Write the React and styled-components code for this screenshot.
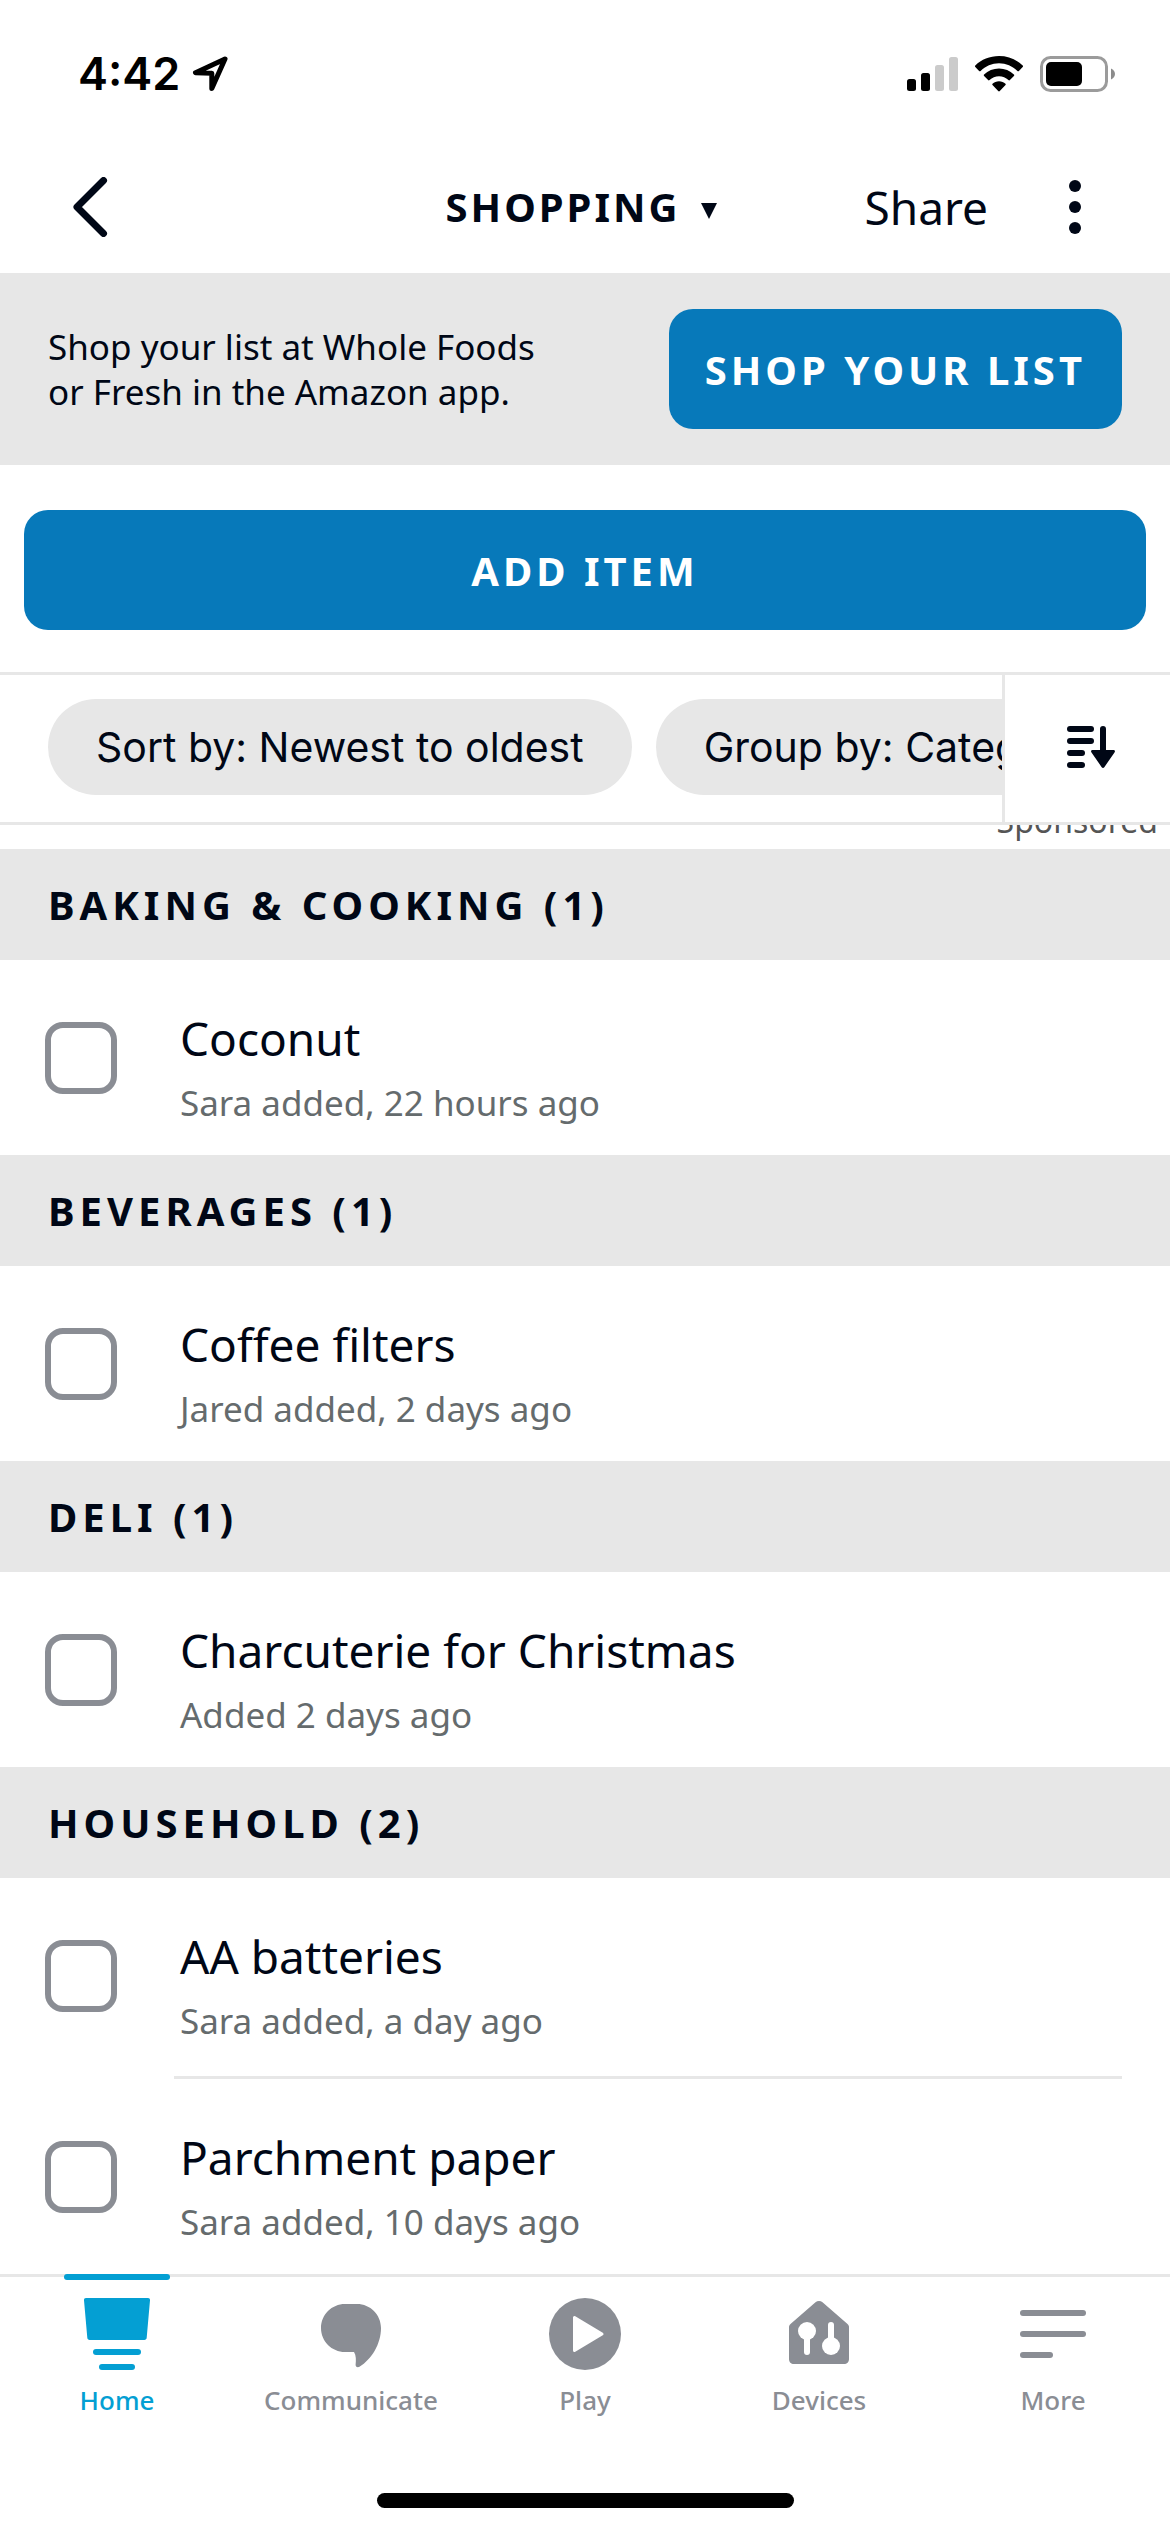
import React, { useState } from 'react';
import styled, { createGlobalStyle } from 'styled-components';

const color = {
  ink: '#000716',
  muted: '#656b6d',
  grey: '#8a8d94',
  line: '#e7e7e7',
  blue: '#0779ba',
  accent: '#049fd3',
};

const GlobalStyle = createGlobalStyle`
  *, *::before, *::after { box-sizing: border-box; }
  body {
    margin: 0;
    background: #fff;
    color: ${color.ink};
    font-family: "Noto Sans", "Open Sans", sans-serif;
  }
  button {
    margin: 0;
    padding: 0;
    border: 0;
    background: none;
    color: inherit;
    font: inherit;
    cursor: pointer;
  }
  svg { display: block; flex: none; }
`;

const Screen = styled.div`
  display: flex;
  flex-direction: column;
  min-height: 100vh;
`;

const StatusBar = styled.div`
  display: flex;
  align-items: center;
  justify-content: space-between;
  height: 141px;
  padding: 6px 54px 0 78px;
  color: #000;
`;

const StatusGroup = styled.div`
  display: flex;
  align-items: center;
  gap: ${(p) => p.$gap}px;
`;

const Clock = styled.time`
  font-family: Inter, sans-serif;
  font-size: 45px;
  line-height: 52px;
  font-weight: 600;
`;

const Header = styled.header`
  display: grid;
  grid-template-columns: 1fr auto 1fr;
  align-items: center;
  height: 132px;
  padding: 0 68px 0 60px;
`;

const IconButton = styled.button`
  display: flex;
  align-items: center;
  justify-content: center;
`;

const BackButton = styled(IconButton)`
  && {
    justify-self: start;
    padding: 0 12px;
  }
`;

const ListTitle = styled.button`
  && {
    display: flex;
    align-items: center;
    gap: 20px;
    font-size: 40px;
    line-height: 54px;
    font-weight: 700;
    letter-spacing: 3px;
  }
`;

const HeaderActions = styled.div`
  display: flex;
  align-items: center;
  justify-content: flex-end;
  gap: 60px;
`;

const ShareButton = styled.button`
  && {
    font-size: 46px;
    line-height: 60px;
  }
`;

const Banner = styled.section`
  display: flex;
  align-items: center;
  justify-content: space-between;
  gap: 48px;
  padding: 36px 48px;
  background: ${color.line};
`;

const BannerText = styled.p`
  margin: 0;
  max-width: 504px;
  font-size: 35px;
  line-height: 45px;
`;

const PrimaryButton = styled.button`
  && {
    height: 120px;
    padding: 0 36px;
    border-radius: 24px;
    background: ${color.blue};
    color: #fff;
    font-size: 40px;
    font-weight: 700;
    letter-spacing: 4px;
    white-space: nowrap;
    flex: ${(p) => (p.$wide ? '1' : 'none')};
  }
`;

const AddBar = styled.div`
  display: flex;
  padding: 45px 24px 42px;
`;

const FilterBar = styled.div`
  display: flex;
  height: 153px;
  border-top: 3px solid ${color.line};
  border-bottom: 3px solid ${color.line};
`;

const FilterScroller = styled.div`
  display: flex;
  flex: 1;
  align-items: flex-start;
  gap: 24px;
  min-width: 0;
  padding: 24px 0 0 48px;
  overflow: hidden;
`;

const Pill = styled.button`
  && {
    flex: none;
    height: 96px;
    padding: 0 48px;
    border-radius: 48px;
    background: ${color.line};
    font-family: Inter, sans-serif;
    font-size: 41px;
    white-space: nowrap;
  }
`;

const SortButton = styled(IconButton)`
  && {
    flex: none;
    width: 168px;
    padding: 0 0 3px 6px;
    border-left: 3px solid ${color.line};
  }
`;

const SponsoredClip = styled.div`
  display: flex;
  align-items: flex-end;
  justify-content: flex-end;
  height: 24px;
  padding: 0 12px 8px;
  overflow: hidden;
  color: #555;
  font-size: 32px;
  line-height: 40px;
`;

const List = styled.main`
  flex: 1;
`;

const GroupTitle = styled.h2`
  margin: 0;
  padding: 28px 48px;
  background: ${color.line};
  font-size: 40px;
  line-height: 55px;
  font-weight: 700;
  letter-spacing: 5px;
`;

const Items = styled.ul`
  margin: 0;
  padding: 0;
  list-style: none;
`;

const Item = styled.li`
  padding: 0 48px 0 45px;
`;

const ItemLabel = styled.label`
  display: flex;
  align-items: flex-start;
  gap: 57px;
`;

const Checkbox = styled.input`
  appearance: none;
  flex: none;
  width: 72px;
  height: 72px;
  margin: 62px 0 0;
  border: 6px solid ${color.grey};
  border-radius: 18px;
  background: #fff;
  &:checked { background: ${color.accent}; }
`;

const ItemBody = styled.span`
  display: flex;
  flex: 1;
  flex-direction: column;
  height: ${(p) => (p.$divided ? 201 : 195)}px;
  padding: 48px 0 0 6px;
  border-bottom: ${(p) => (p.$divided ? `3px solid ${color.line}` : '0')};
`;

const ItemName = styled.span`
  font-size: 46px;
  line-height: 60px;
`;

const ItemNote = styled.span`
  color: ${color.muted};
  font-size: 35px;
  line-height: 70px;
`;

const TabBar = styled.nav`
  display: grid;
  grid-template-columns: repeat(5, 1fr);
  height: 219px;
  border-top: 3px solid ${color.line};
`;

const Tab = styled.a`
  position: relative;
  display: flex;
  flex-direction: column;
  align-items: center;
  gap: 12px;
  padding-top: 21px;
  color: ${(p) => (p.$active ? color.accent : color.grey)};
  font-size: 26px;
  line-height: 36px;
  font-weight: 500;
  text-decoration: none;
  &::before {
    content: "";
    display: ${(p) => (p.$active ? 'block' : 'none')};
    position: absolute;
    top: -3px;
    width: 106px;
    height: 6px;
    border-radius: 3px;
    background: ${color.accent};
  }
`;

const HomeIndicator = styled.div`
  width: 417px;
  height: 15px;
  margin: 0 auto 24px;
  border-radius: 8px;
  background: #000;
`;

const LocationIcon = () => (
  <svg width="37" height="37" viewBox="0 0 37 37" fill="none" stroke="currentColor" strokeWidth="5" strokeLinejoin="round">
    <path d="M33 4 L3.500 17.800 L19.800 18.200 L19.800 33.500 Z" />
  </svg>
);

const SignalIcon = () => (
  <svg width="51" height="34" viewBox="0 0 51 34">
    <rect x="0" y="22" width="9" height="12" rx="2.500" />
    <rect x="14" y="16" width="9" height="18" rx="2.500" />
    <rect x="28" y="8" width="9" height="26" rx="2.500" fill="#cbcbcb" />
    <rect x="42" y="0" width="9" height="34" rx="2.500" fill="#cbcbcb" />
  </svg>
);

const WifiIcon = () => (
  <svg width="48" height="36" viewBox="0 0 48 36">
    <path d="M24 0C14.800 0 6.400 3.500 0.300 9.400c-.5.400-.5 1 0 1.500l3.800 4c.4.400 1 .4 1.500 0C10.400 10.200 17 7.300 24 7.300s13.600 2.900 18.400 7.600c.5.400 1.100.4 1.500 0l3.800-4c.5-.5.500-1.100 0-1.500C41.600 3.500 33.200 0 24 0z" />
    <path d="M24 12.500c-5.700 0-11 2.200-14.900 5.900-.5.400-.5 1 0 1.500l4 4.200c.4.400 1 .4 1.500 0 2.500-2.300 5.800-3.800 9.400-3.800s6.900 1.500 9.400 3.800c.5.400 1.100.4 1.500 0l4-4.200c.5-.5.500-1.100 0-1.500-3.900-3.700-9.200-5.900-14.900-5.900z" />
    <path d="M24 25.300c-2.500 0-4.800.9-6.500 2.400-.4.400-.4 1 0 1.400l5.700 6c.5.500 1.100.5 1.600 0l5.700-6c.4-.4.400-1 0-1.400-1.700-1.500-4-2.400-6.500-2.400z" />
  </svg>
);

const BatteryIcon = () => (
  <svg width="76" height="36" viewBox="0 0 76 36">
    <rect x="1.500" y="1.500" width="65" height="33" rx="9" fill="none" stroke="#9b9b9b" strokeWidth="3" />
    <rect x="6" y="6" width="36" height="24" rx="5" />
    <path d="M71 12.500c2.400 1 4 3.100 4 5.500s-1.600 4.500-4 5.500z" fill="#8c8c8c" />
  </svg>
);

const BackIcon = () => (
  <svg width="36" height="60" viewBox="0 0 36 60" fill="none" stroke="currentColor" strokeWidth="7" strokeLinecap="round" strokeLinejoin="round">
    <path d="M31.500 3.500 L5 30 L31.500 56.500" />
  </svg>
);

const CaretIcon = () => (
  <svg width="16" height="24" viewBox="0 0 16 24" fill="currentColor">
    <path d="M0 8h16L8 24z" />
  </svg>
);

const DotsIcon = () => (
  <svg width="54" height="54" viewBox="0 0 54 54" fill="currentColor">
    <circle cx="27" cy="6" r="6" />
    <circle cx="27" cy="27" r="6" />
    <circle cx="27" cy="48" r="6" />
  </svg>
);

const SortIcon = () => (
  <svg width="48" height="42" viewBox="0 0 48 42" fill="currentColor">
    <rect x="0" y="0" width="27" height="6" rx="3" />
    <rect x="0" y="12" width="27" height="6" rx="3" />
    <rect x="0" y="24" width="18" height="6" rx="3" />
    <rect x="0" y="36" width="18" height="6" rx="3" />
    <path d="M33 3a3 3 0 0 1 6 0v21h7.500c1.300 0 2 1.300 1 2.400L37.300 41.200c-.7.900-1.900.9-2.600 0L24.500 26.400c-1-1.100-.3-2.400 1-2.400H33z" />
  </svg>
);

const HomeIcon = () => (
  <svg width="72" height="72" viewBox="0 0 72 72" fill="currentColor">
    <path d="M5 0h62c1.300 0 2.100.9 2 2.200l-3.300 37.600c-.1 1.300-1 2.200-2.300 2.200H8.600c-1.300 0-2.200-.9-2.300-2.200L3 2.200C2.900.9 3.700 0 5 0z" />
    <rect x="12" y="51" width="48" height="6" rx="3" />
    <rect x="18" y="66" width="36" height="6" rx="3" />
  </svg>
);

const ChatIcon = () => (
  <svg width="72" height="72" viewBox="0 0 72 72" fill="currentColor">
    <path d="M30 6h12c13.300 0 24 10.700 24 24 0 16-9.500 31.500-21.500 38.700-2 1.200-4.200 0-3.900-2.200.5-4.500.6-9-1.600-12.500h-9C16.700 54 6 43.300 6 30S16.700 6 30 6z" />
  </svg>
);

const PlayIcon = () => (
  <svg width="72" height="72" viewBox="0 0 72 72">
    <circle cx="36" cy="36" r="36" fill="currentColor" />
    <path d="M25.500 19.500v33L53 36z" fill="#fff" stroke="#fff" strokeWidth="3" strokeLinejoin="round" />
  </svg>
);

const DevicesIcon = () => (
  <svg width="72" height="72" viewBox="0 0 72 72">
    <path d="M32.500 4.300c2-1.700 5-1.700 7 0L64.500 26c1 .8 1.500 1.900 1.500 3v32c0 3-2 5-5 5H11c-3 0-5-2-5-5V29c0-1.100.5-2.200 1.500-3z" fill="currentColor" />
    <g fill="#fff">
      <circle cx="24" cy="33" r="9" />
      <rect x="21" y="33" width="6" height="24" rx="3" />
      <circle cx="48" cy="48" r="9" />
      <rect x="45" y="24" width="6" height="24" rx="3" />
    </g>
  </svg>
);

const MoreIcon = () => (
  <svg width="72" height="72" viewBox="0 0 72 72" fill="currentColor">
    <rect x="3" y="12" width="66" height="6" rx="3" />
    <rect x="3" y="33" width="66" height="6" rx="3" />
    <rect x="3" y="54" width="33" height="6" rx="3" />
  </svg>
);

const groups = [
  { title: 'BAKING & COOKING', items: [{ name: 'Coconut', note: 'Sara added, 22 hours ago' }] },
  { title: 'BEVERAGES', items: [{ name: 'Coffee filters', note: 'Jared added, 2 days ago' }] },
  { title: 'DELI', items: [{ name: 'Charcuterie for Christmas', note: 'Added 2 days ago' }] },
  {
    title: 'HOUSEHOLD',
    items: [
      { name: 'AA batteries', note: 'Sara added, a day ago' },
      { name: 'Parchment paper', note: 'Sara added, 10 days ago' },
    ],
  },
];

const tabs = [
  { label: 'Home', Icon: HomeIcon },
  { label: 'Communicate', Icon: ChatIcon },
  { label: 'Play', Icon: PlayIcon },
  { label: 'Devices', Icon: DevicesIcon },
  { label: 'More', Icon: MoreIcon },
];

function ListItem({ name, note, divided }) {
  const [done, setDone] = useState(false);
  return (
    <Item>
      <ItemLabel>
        <Checkbox type="checkbox" checked={done} onChange={(e) => setDone(e.target.checked)} />
        <ItemBody $divided={divided}>
          <ItemName>{name}</ItemName>
          <ItemNote>{note}</ItemNote>
        </ItemBody>
      </ItemLabel>
    </Item>
  );
}

export default function App() {
  return (
    <Screen>
      <GlobalStyle />
      <StatusBar>
        <StatusGroup $gap={12}>
          <Clock>4:42</Clock>
          <LocationIcon />
        </StatusGroup>
        <StatusGroup $gap={17}>
          <SignalIcon />
          <WifiIcon />
          <BatteryIcon />
        </StatusGroup>
      </StatusBar>

      <Header>
        <BackButton aria-label="Back">
          <BackIcon />
        </BackButton>
        <ListTitle>
          SHOPPING
          <CaretIcon />
        </ListTitle>
        <HeaderActions>
          <ShareButton>Share</ShareButton>
          <IconButton aria-label="More options">
            <DotsIcon />
          </IconButton>
        </HeaderActions>
      </Header>

      <Banner>
        <BannerText>Shop your list at Whole Foods or Fresh in the Amazon app.</BannerText>
        <PrimaryButton>SHOP YOUR LIST</PrimaryButton>
      </Banner>

      <AddBar>
        <PrimaryButton $wide>ADD ITEM</PrimaryButton>
      </AddBar>

      <FilterBar>
        <FilterScroller>
          <Pill>Sort by: Newest to oldest</Pill>
          <Pill>Group by: Category</Pill>
        </FilterScroller>
        <SortButton aria-label="Sort">
          <SortIcon />
        </SortButton>
      </FilterBar>

      <SponsoredClip>Sponsored</SponsoredClip>

      <List>
        {groups.map((group) => (
          <section key={group.title}>
            <GroupTitle>
              {group.title} ({group.items.length})
            </GroupTitle>
            <Items>
              {group.items.map((item, i) => (
                <ListItem key={item.name} {...item} divided={i < group.items.length - 1} />
              ))}
            </Items>
          </section>
        ))}
      </List>

      <TabBar>
        {tabs.map(({ label, Icon }, i) => (
          <Tab key={label} href="#" $active={i === 0}>
            <Icon />
            {label}
          </Tab>
        ))}
      </TabBar>
      <HomeIndicator />
    </Screen>
  );
}
